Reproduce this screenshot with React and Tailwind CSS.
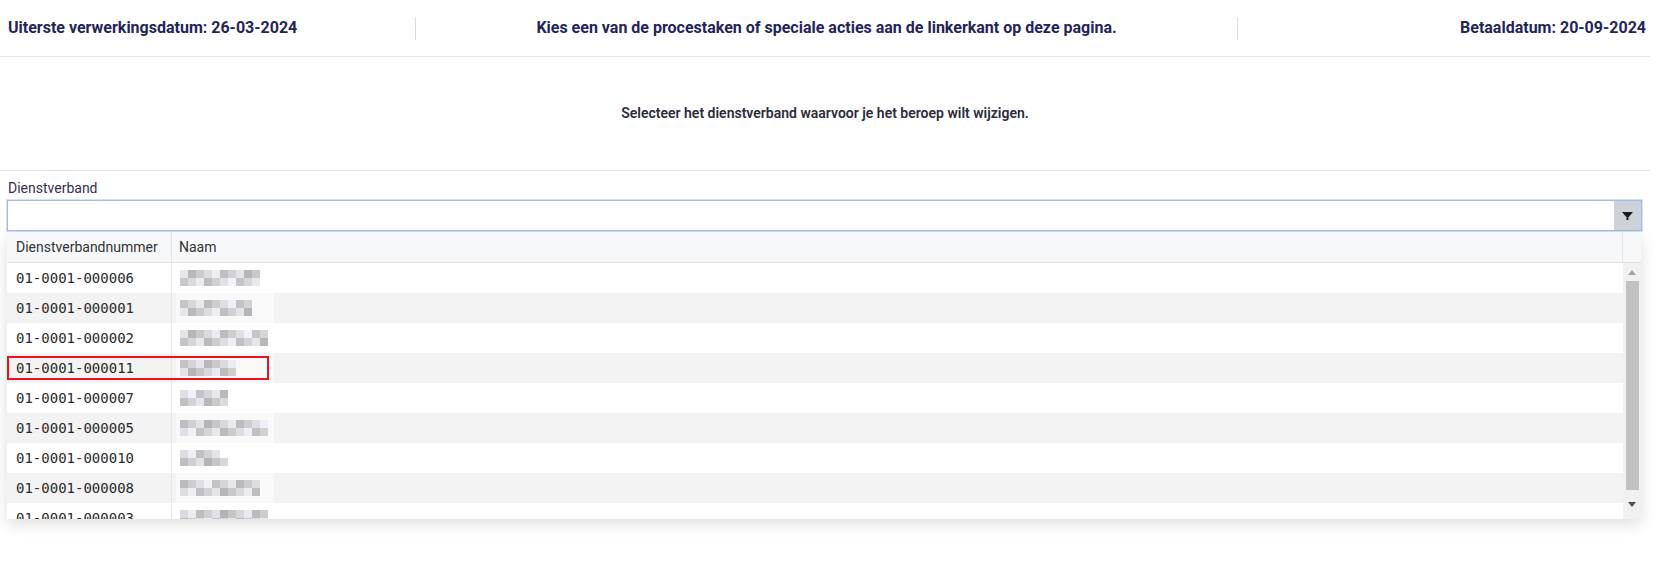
// ─── DATA ───────────────────────────────────────────────
const rows = [
  { nr: "01-0001-000006", blocks: [10, 10] },
  { nr: "01-0001-000001", blocks: [9, 9] },
  { nr: "01-0001-000002", blocks: [11, 11] },
  { nr: "01-0001-000011", blocks: [7, 7], marked: true },
  { nr: "01-0001-000007", blocks: [6, 6] },
  { nr: "01-0001-000005", blocks: [11, 11] },
  { nr: "01-0001-000010", blocks: [5, 6] },
  { nr: "01-0001-000008", blocks: [10, 10] },
  { nr: "01-0001-000003", blocks: [11, 11] },
];

// pseudo random grey for the pixelated names
const grey = (seed) => {
  const r = ((seed * 9301 + 49297) % 233280) / 233280;
  const v = Math.round(180 + r * 62);
  const b = Math.min(255, v + Math.round(r * 8));
  return `rgb(${v},${v},${b})`;
};

// ─── PARTS ──────────────────────────────────────────────
const Blurred = ({ blocks, seed }) => (
  <div className="ml-[4px] w-[98px] h-full bg-white/50 flex flex-col justify-center pl-[4px]">
    {blocks.map((n, r) => (
      <div key={r} className="flex h-[8px]">
        {Array.from({ length: n }).map((_, i) => (
          <div
            key={i}
            className="w-[8px] h-full"
            style={{ background: grey(seed * 37 + r * 13 + i * 7 + 3) }}
          />
        ))}
      </div>
    ))}
  </div>
);

const Divider = () => <div className="w-px h-[23px] bg-[#d7e0ea]" />;

// ─── PAGE ───────────────────────────────────────────────
export default function App() {
  return (
    <div className="w-[1650px] bg-white font-['Roboto',sans-serif]">
      {/* top bar */}
      <div className="flex items-center h-[57px] border-b border-[#e2e4e8] text-[16px] font-bold text-[#1f2559]">
        <div className="w-[415px] pl-[8px]">Uiterste verwerkingsdatum: 26-03-2024</div>
        <Divider />
        <div className="flex-1 text-center">
          Kies een van de procestaken of speciale acties aan de linkerkant op deze pagina.
        </div>
        <Divider />
        <div className="w-[412px] text-right pr-[4px]">Betaaldatum: 20-09-2024</div>
      </div>

      {/* instruction */}
      <div className="h-[114px] flex items-center justify-center border-b border-[#e2e2e2] text-[14px] font-semibold text-[#2c2c3a]">
        Selecteer het dienstverband waarvoor je het beroep wilt wijzigen.
      </div>

      {/* field */}
      <div className="pt-[9px]">
        <div className="pl-[8px] text-[14px] leading-[16px] text-[#36304f]">Dienstverband</div>
        <div className="mt-[3px] ml-[6px] w-[1637px] h-[33px] border border-[#e0e0e0]">
          <div className="h-full border border-[#9bbdf0] flex justify-end">
            <div className="w-[27px] h-full bg-[#cdd1d9] flex items-center justify-center">
              <svg width="11" height="8" viewBox="0 0 11 8">
                <path d="M0 0h11L5.5 6.5z M4.5 6h2v2h-2z" fill="#1a1a1a" />
              </svg>
            </div>
          </div>
        </div>

        {/* dropdown grid */}
        <div className="ml-[7px] w-[1634px] bg-white shadow-[0_5px_14px_rgba(0,0,0,0.13)] text-[#333]">
          <div className="flex h-[31px] bg-[#f7f8fa] border-b border-[#e1e1e1] text-[14px]">
            <div className="w-[165px] pl-[9px] flex items-center border-r border-[#e3e3e3]">
              Dienstverbandnummer
            </div>
            <div className="flex-1 pl-[7px] flex items-center border-r border-[#e3e3e3]">Naam</div>
            <div className="w-[18px]" />
          </div>

          <div className="flex h-[256px]">
            <div className="flex-1 overflow-hidden">
              {rows.map((row, i) => (
                <div
                  key={row.nr}
                  className={`relative flex h-[30px] shrink-0 ${i % 2 ? "bg-[#f3f3f3]" : "bg-white"}`}
                >
                  <div className="w-[165px] pl-[9px] flex items-center border-r border-[#e6e6e6] font-['DejaVu_Sans_Mono',monospace] text-[14px] text-[#2a2a2a]">
                    {row.nr}
                  </div>
                  <Blurred blocks={row.blocks} seed={i + 1} />
                  {row.marked && (
                    <div className="absolute left-0 top-[3px] w-[262px] h-[24px] border-2 border-[#e8141b]" />
                  )}
                </div>
              ))}
            </div>

            {/* scrollbar */}
            <div className="w-[18px] bg-[#f1f1f1] flex flex-col items-center">
              <div className="h-[18px] flex items-center justify-center">
                <svg width="8" height="5" viewBox="0 0 8 5">
                  <path d="M4 0L8 5H0z" fill="#a3a3a3" />
                </svg>
              </div>
              <div className="w-[13px] h-[209px] bg-[#c1c1c1]" />
              <div className="flex-1 flex items-center justify-center">
                <svg width="8" height="5" viewBox="0 0 8 5">
                  <path d="M0 0h8L4 5z" fill="#505050" />
                </svg>
              </div>
            </div>
          </div>
        </div>
      </div>
      <div className="h-[49px]" />
    </div>
  );
}
